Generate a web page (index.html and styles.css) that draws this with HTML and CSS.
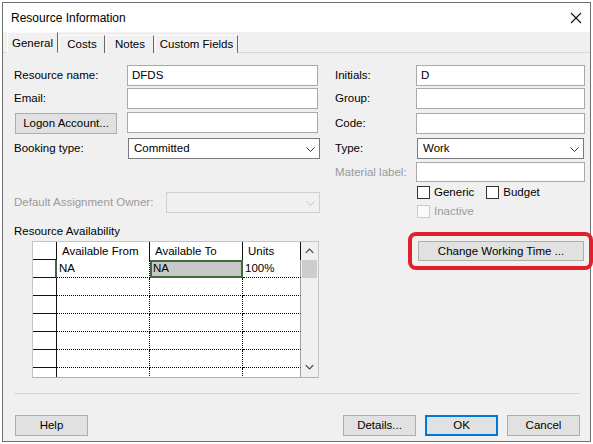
FILE: index.html
```html
<!DOCTYPE html>
<html>
<head>
<meta charset="utf-8">
<link rel="stylesheet" href="styles.css">
</head>
<body>
<div class="screen">
  <div class="dialog">
    <div class="titlebar">
      <span class="title">Resource Information</span>
      <svg class="close" width="12" height="12" viewBox="0 0 12 12"><path d="M1 1 L11 11 M11 1 L1 11" stroke="#111" stroke-width="1.1" fill="none"/></svg>
    </div>
    <div class="tabs">
      <div class="tab active t-general">General</div>
      <div class="tab t-costs">Costs</div>
      <div class="tab t-notes">Notes</div>
      <div class="tab t-custom">Custom Fields</div>
    </div>
    <div class="panel">
      <div class="col-left">
        <div class="row r1"><span class="lbl lw">Resource name:</span><div class="input wl">DFDS</div></div>
        <div class="row r2"><span class="lbl lw">Email:</span><div class="input wl"></div></div>
        <div class="row r3"><div class="lw"><div class="btn logon">Logon Account...</div></div><div class="input wl"></div></div>
        <div class="row r4"><span class="lbl lw2">Booking type:</span><div class="select wsel">Committed<svg class="chev" width="9" height="5" viewBox="0 0 9 5"><path d="M0.5 0.5 L4.5 4.5 L8.5 0.5" stroke="#333" fill="none"/></svg></div></div>
        <div class="row r5"><span class="lbl dis lw3">Default Assignment Owner:</span><div class="select disabled wdis"><svg class="chev" width="9" height="5" viewBox="0 0 9 5"><path d="M0.5 0.5 L4.5 4.5 L8.5 0.5" stroke="#bdbdbd" fill="none"/></svg></div></div>
        <div class="section">Resource Availability</div>
        <div class="gridwrap">
          <div class="grid">
            <div class="c rh"></div><div class="c hd">Available From</div><div class="c hd">Available To</div><div class="c hd units">Units</div>
            <div class="c rh cur"></div><div class="c dc">NA</div><div class="c dc sel">NA</div><div class="c dc units">100%</div>
            <div class="c rh"></div><div class="c dc"></div><div class="c dc"></div><div class="c dc units"></div>
            <div class="c rh"></div><div class="c dc"></div><div class="c dc"></div><div class="c dc units"></div>
            <div class="c rh"></div><div class="c dc"></div><div class="c dc"></div><div class="c dc units"></div>
            <div class="c rh"></div><div class="c dc"></div><div class="c dc"></div><div class="c dc units"></div>
            <div class="c rh"></div><div class="c dc"></div><div class="c dc"></div><div class="c dc units"></div>
            <div class="c rh"></div><div class="c dc"></div><div class="c dc"></div><div class="c dc units"></div>
          </div>
          <div class="vscroll">
            <svg class="arrow" width="18" height="18" viewBox="0 0 18 18"><path d="M5 11 L9 7 L13 11" stroke="#444" stroke-width="1.2" fill="none"/></svg>
            <div class="thumb"></div>
            <div class="track"></div>
            <svg class="arrow" width="18" height="18" viewBox="0 0 18 18"><path d="M5 6 L9 10 L13 6" stroke="#444" stroke-width="1.2" fill="none"/></svg>
          </div>
        </div>
      </div>
      <div class="col-right">
        <div class="row q1"><span class="lbl rw">Initials:</span><div class="input wr">D</div></div>
        <div class="row q2"><span class="lbl rw">Group:</span><div class="input wr"></div></div>
        <div class="row q3"><span class="lbl rw">Code:</span><div class="input wr"></div></div>
        <div class="row q4"><span class="lbl rw2">Type:</span><div class="select wrs">Work<svg class="chev" width="9" height="5" viewBox="0 0 9 5"><path d="M0.5 0.5 L4.5 4.5 L8.5 0.5" stroke="#333" fill="none"/></svg></div></div>
        <div class="row q5"><span class="lbl dis rw">Material label:</span><div class="input wr short"></div></div>
        <div class="row q6 checks">
          <span class="box"></span><span class="ctext">Generic</span>
          <span class="box b2"></span><span class="ctext">Budget</span>
        </div>
        <div class="row q7 checks">
          <span class="box disbox"></span><span class="ctext dis">Inactive</span>
        </div>
        <div class="cwt-wrap">
          <div class="btn cwt">Change Working Time ...</div>
          <div class="highlight"></div>
        </div>
      </div>
    </div>
    <div class="footer">
      <div class="sep"></div>
      <div class="buttons">
        <div class="btn fb">Help</div>
        <div class="spacer"></div>
        <div class="btn fb">Details...</div>
        <div class="btn fb ok">OK</div>
        <div class="btn fb">Cancel</div>
      </div>
    </div>
  </div>
</div>
</body>
</html>
```

FILE: styles.css
```css
* { box-sizing: border-box; }
html, body { margin: 0; padding: 0; background: #ffffff; }
body {
  font-family: "Liberation Sans", Arial, sans-serif;
  font-size: 11.5px;
  color: #000;
  width: 593px;
  height: 444px;
  overflow: hidden;
}
.screen {
  padding: 2px 0 0 2px;
  height: 444px;
  background: #fff;
}
.dialog {
  width: 589px;
  height: 440px;
  border: 1px solid #6f6f6f;
  background: #f0f0f0;
  display: flex;
  flex-direction: column;
}
.titlebar {
  height: 29px;
  background: #fff;
  display: flex;
  align-items: center;
  padding-left: 8px;
  flex-shrink: 0;
}
.title { font-size: 12px; padding-top: 1px; }
.close { margin-left: auto; margin-right: 8px; }

.tabs {
  height: 21px;
  display: flex;
  align-items: flex-end;
  padding-left: 4px;
  border-bottom: 1px solid #d9d9d9;
  flex-shrink: 0;
}
.tab {
  height: 18px;
  line-height: 17px;
  text-align: center;
  border-right: 1px solid #6b6b6b;
  border-top: 1px solid #fbfbfb;
  border-left: 1px solid #fbfbfb;
  font-size: 11.5px;
  margin-bottom: -1px;
  background: #f0f0f0;
}
.tab.active { height: 21px; line-height: 20px; position: relative; z-index: 1; border-bottom: 1px solid #f0f0f0; }
.t-general { width: 51px; }
.t-costs { width: 46px; margin-left: 1px; }
.t-notes { width: 48px; margin-left: 1px; }
.t-custom { width: 83px; margin-left: 1px; }

.panel {
  flex: 1;
  display: flex;
  padding: 12px 0 0 11px;
}
.col-left { width: 306px; display: flex; flex-direction: column; }
.col-right { width: 250px; margin-left: 15px; display: flex; flex-direction: column; }

.row { display: flex; align-items: flex-start; flex-shrink: 0; }
.lbl { line-height: 21px; white-space: nowrap; }
.dis { color: #9a9a9a; }
.lw { width: 113px; flex-shrink: 0; }
.lw2 { width: 114px; flex-shrink: 0; }
.lw3 { width: 152px; flex-shrink: 0; }
.rw { width: 81px; flex-shrink: 0; }
.rw2 { width: 82px; flex-shrink: 0; }

.r1 { height: 23px; }
.r2 { height: 24px; }
.r3 { height: 26px; }
.r4 { height: 21px; }
.r5 { height: 21px; margin-top: 33px; }

.q1 { height: 23px; }
.q2 { height: 25px; }
.q3 { height: 25px; }
.q4 { height: 24px; }
.q5 { height: 24px; }
.q6 { height: 13px; margin-bottom: 6px; }
.q7 { height: 13px; }

.input {
  height: 21px;
  background: #fff;
  border: 1px solid #a9a9a9;
  padding-left: 4px;
  line-height: 19px;
}
.short { height: 20px; }
.wl { width: 191px; }
.wr { width: 169px; }
.select {
  height: 21px;
  background: #fff;
  border: 1px solid #7a7a7a;
  padding-left: 5px;
  line-height: 18px;
  display: flex;
  align-items: flex-start;
}
.select .chev { margin-left: auto; margin-right: 4px; margin-top: 8px; }
.select.disabled { background: #f0f0f0; border-color: #cfcfcf; }
.wsel { width: 192px; }
.wdis { width: 154px; }
.wrs { width: 167px; }

.btn {
  background: #e1e1e1;
  border: 1px solid #adadad;
  text-align: center;
  white-space: nowrap;
}
.logon { width: 102px; height: 21px; line-height: 19px; margin: 1px 0 0 1px; }

.section { margin-top: 11px; line-height: 14px; }
.gridwrap {
  margin: 3px 0 0 18px;
  width: 287px;
  height: 137px;
  border: 1px solid #c4c4c4;
  border-bottom-color: #b0b0b0;
  background: #fff;
  display: flex;
  overflow: hidden;
}
.grid {
  display: grid;
  grid-template-columns: 24px 93px 93px 58px;
  grid-auto-rows: 18px;
  width: 268px;
  align-content: start;
}
.c { line-height: 17px; white-space: nowrap; overflow: hidden; }
.rh { border-right: 1px solid #111; border-bottom: 1px solid #111; }
.rh.cur { border-right: 2px solid #3d6b3d; }
.hd { border-right: 1px solid #111; padding-left: 5px; line-height: 19px; }
.dc { border-right: 1px dotted #000; border-bottom: 1px dotted #000; padding-left: 2px; }
.units.hd { border-right: 1px solid #111; }
.units.dc { border-right: 1px solid #a0a0a0; }
.sel { background: #c8c8c8; outline: 2px solid #3d6b3d; outline-offset: -2px; padding-left: 3px; }

.vscroll {
  width: 17px;
  background: #f0f0f0;
  display: flex;
  flex-direction: column;
  height: 135px;
}
.arrow { display: block; flex-shrink: 0; width: 17px; }
.thumb { height: 18px; margin: 0 1px 0 1px; background: #cdcdcd; flex-shrink: 0; }
.track { flex: 1; }

.checks { align-items: center; padding-left: 82px; }
.box { width: 13px; height: 13px; border: 1px solid #333; background: #fff; flex-shrink: 0; }
.disbox { border-color: #cccccc; background: #fafafa; }
.b2 { margin-left: 12px; }
.ctext { margin-left: 4px; line-height: 13px; }

.cwt-wrap { position: relative; margin: 23px 0 0 83px; width: 166px; }
.cwt { height: 20px; line-height: 18px; width: 166px; }
.highlight {
  position: absolute;
  left: -10px; top: -9px;
  width: 185px; height: 38px;
  border: 4px solid #e0202a;
  border-radius: 8px;
}

.footer { height: 48px; flex-shrink: 0; padding: 0 10px 0 11px; }
.sep { height: 1px; background: #d7d7d7; }
.buttons { display: flex; margin-top: 21px; padding-left: 1px; }
.spacer { flex: 1; }
.fb { width: 73px; height: 21px; line-height: 19px; margin-left: 9px; }
.fb:first-child { margin-left: 0; }
.ok { border: 2px solid #0078d7; line-height: 17px; }
```
